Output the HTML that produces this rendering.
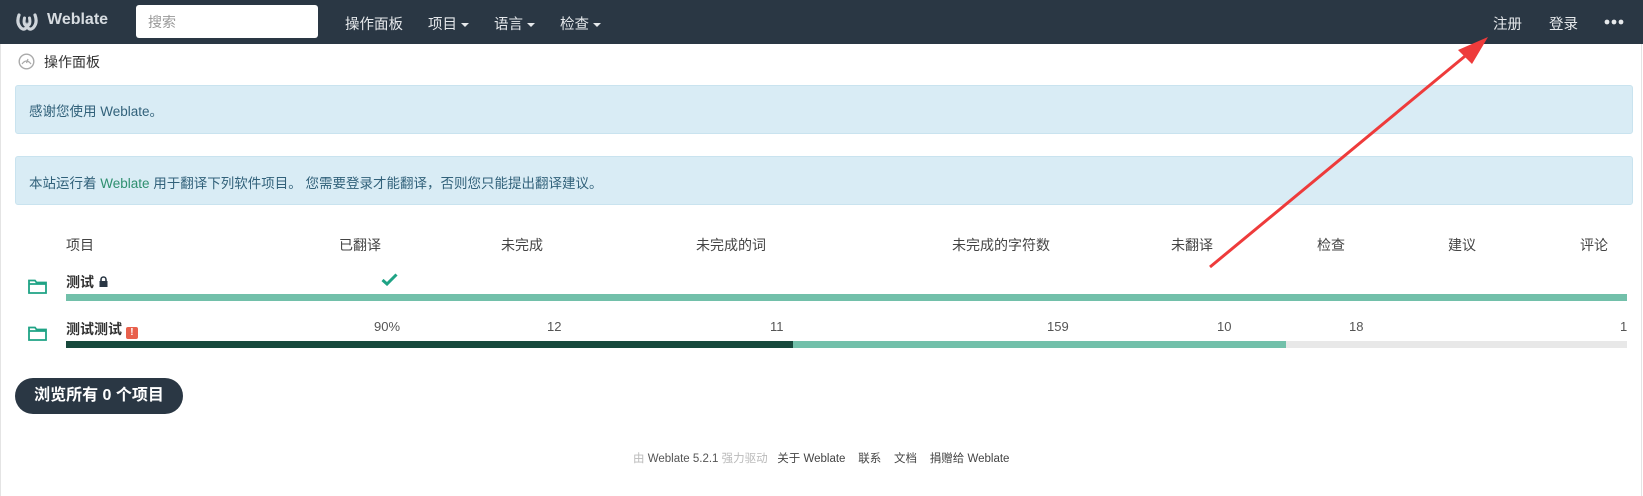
<!DOCTYPE html>
<html><head><meta charset="utf-8">
<style>
*{margin:0;padding:0;box-sizing:border-box}
body{width:1643px;height:496px;background:#fff;font-family:"Liberation Sans","Noto Sans CJK SC",sans-serif;font-size:14px;color:#333;position:relative;overflow:hidden}
.a{position:absolute;white-space:nowrap}
.nav{position:absolute;left:0;top:0;width:1643px;height:44px;background:#2a3744}
.nav .a{color:#e6e9ec;font-size:14.5px;top:13px}
.car{display:inline-block;border-left:4px solid transparent;border-right:4px solid transparent;border-top:4px solid #e6e9ec;vertical-align:middle;margin-left:4px}
.alert{position:absolute;left:15px;width:1618px;background:#d9ecf5;border:1px solid #c9e3ef;border-radius:3px}
.h{top:235px;color:#444}
.bar{position:absolute;height:7px}
.n{color:#555;top:319px;font-size:13px}
</style></head><body>
<div style="position:absolute;left:0;top:44px;width:1px;height:452px;background:#e4e4e4"></div>
<div style="position:absolute;left:1641px;top:44px;width:1px;height:452px;background:#e4e4e4"></div>
<div class="nav">
  <svg class="a" style="left:15px;top:11px" width="24" height="22" viewBox="0 0 24 22"><path d="M4 4 Q1 12 6 17 Q10 20 12 15 Q14 20 18 17 Q23 12 20 4" fill="none" stroke="#cfd5db" stroke-width="3.2" stroke-linecap="round"/><path d="M9.5 7 Q8 14 12 15 Q16 14 14.5 7" fill="none" stroke="#cfd5db" stroke-width="3" stroke-linecap="round"/></svg>
  <div class="a" style="left:47px;top:11px;font-weight:bold;font-size:16px;color:#d7dce1">Weblate</div>
  <div style="position:absolute;left:136px;top:5px;width:182px;height:33px;background:#fff;border-radius:3px"></div>
  <div class="a" style="left:148px;top:12px;color:#999;font-size:14px">搜索</div>
  <div class="a" style="left:345px">操作面板</div>
  <div class="a" style="left:428px">项目<span class="car"></span></div>
  <div class="a" style="left:494px">语言<span class="car"></span></div>
  <div class="a" style="left:560px">检查<span class="car"></span></div>
  <div class="a" style="left:1493px">注册</div>
  <div class="a" style="left:1549px">登录</div>
  <svg class="a" style="left:1604px;top:19px" width="20" height="6" viewBox="0 0 20 6"><circle cx="3" cy="3" r="2.4" fill="#e6e9ec"/><circle cx="10" cy="3" r="2.4" fill="#e6e9ec"/><circle cx="17" cy="3" r="2.4" fill="#e6e9ec"/></svg>
</div>
<svg class="a" style="left:18px;top:53px" width="17" height="17" viewBox="0 0 17 17"><circle cx="8.5" cy="8.5" r="7.3" fill="none" stroke="#aaa" stroke-width="1.4"/><path d="M4 11 Q8.5 5 13 11" fill="none" stroke="#aaa" stroke-width="1.2"/><path d="M8.5 10 L10 6" stroke="#aaa" stroke-width="1.3"/></svg>
<div class="a" style="left:44px;top:52px;font-size:14px;color:#333">操作面板</div>
<div class="alert" style="top:85px;height:49px"></div>
<div class="a" style="left:29px;top:100px;color:#31617a;font-size:13.5px">感谢您使用 Weblate。</div>
<div class="alert" style="top:156px;height:49px"></div>
<div class="a" style="left:29px;top:172px;color:#31617a;font-size:13.5px">本站运行着 <span style="color:#2e8f6f">Weblate</span> 用于翻译下列软件项目。 您需要登录才能翻译，否则您只能提出翻译建议。</div>
<div class="a h" style="left:66px">项目</div>
<div class="a h" style="left:339px">已翻译</div>
<div class="a h" style="left:501px">未完成</div>
<div class="a h" style="left:696px">未完成的词</div>
<div class="a h" style="left:952px">未完成的字符数</div>
<div class="a h" style="left:1171px">未翻译</div>
<div class="a h" style="left:1317px">检查</div>
<div class="a h" style="left:1448px">建议</div>
<div class="a h" style="left:1580px">评论</div>
<svg class="a" style="left:28px;top:279px" width="19" height="15" viewBox="0 0 19 15"><path d="M1 1.5 H7 L8.5 3.5 H18 V14 H1 Z M1 5 H18" fill="none" stroke="#1fa385" stroke-width="1.8"/></svg>
<div class="a" style="left:66px;top:272px;font-weight:bold;color:#333">测试 <svg width="11" height="11" viewBox="0 0 11 11"><path d="M3 5 V3.5 A2.5 2.5 0 0 1 8 3.5 V5" fill="none" stroke="#2a3744" stroke-width="1.6"/><rect x="1.5" y="5" width="8" height="6" fill="#2a3744"/></svg></div>
<svg class="a" style="left:381px;top:273px" width="17" height="13" viewBox="0 0 17 13"><path d="M1.5 7 L6 11 L15.5 1.5" fill="none" stroke="#1fa385" stroke-width="3"/></svg>
<div class="bar" style="left:66px;top:294px;width:1561px;background:#72c0aa"></div>
<svg class="a" style="left:28px;top:326px" width="19" height="15" viewBox="0 0 19 15"><path d="M1 1.5 H7 L8.5 3.5 H18 V14 H1 Z M1 5 H18" fill="none" stroke="#1fa385" stroke-width="1.8"/></svg>
<div class="a" style="left:66px;top:319px;font-weight:bold;color:#333">测试测试 <span style="display:inline-block;width:12px;height:12px;background:#e8604c;color:#fff;font-size:10px;text-align:center;line-height:12px;border-radius:2px;vertical-align:-1px">!</span></div>
<div class="a n" style="left:374px">90%</div>
<div class="a n" style="left:547px">12</div>
<div class="a n" style="left:770px">11</div>
<div class="a n" style="left:1047px">159</div>
<div class="a n" style="left:1217px">10</div>
<div class="a n" style="left:1349px">18</div>
<div class="a n" style="left:1620px">1</div>
<div class="bar" style="left:66px;top:341px;width:727px;background:#17493c"></div>
<div class="bar" style="left:793px;top:341px;width:493px;background:#72c0aa"></div>
<div class="bar" style="left:1286px;top:341px;width:341px;background:#e8e8e8"></div>
<div style="position:absolute;left:15px;top:378px;width:168px;height:36px;background:#2a3744;border-radius:18px;color:#fff;font-weight:bold;font-size:16px;text-align:center;line-height:36px">浏览所有 0 个项目</div>
<div class="a" style="left:633px;top:450px;font-size:11.5px;color:#bbb">由 <span style="color:#555">Weblate 5.2.1</span> 强力驱动 &nbsp; <span style="color:#444">关于 Weblate &nbsp; &nbsp;联系 &nbsp; &nbsp;文档 &nbsp; &nbsp;捐赠给 Weblate</span></div>
<svg class="a" style="left:0;top:0" width="1643" height="496"><line x1="1210" y1="267" x2="1470" y2="52" stroke="#ee3b3b" stroke-width="3"/><polygon points="1488,37 1458,50 1472,64" fill="#ee3b3b"/></svg>
</body></html>
